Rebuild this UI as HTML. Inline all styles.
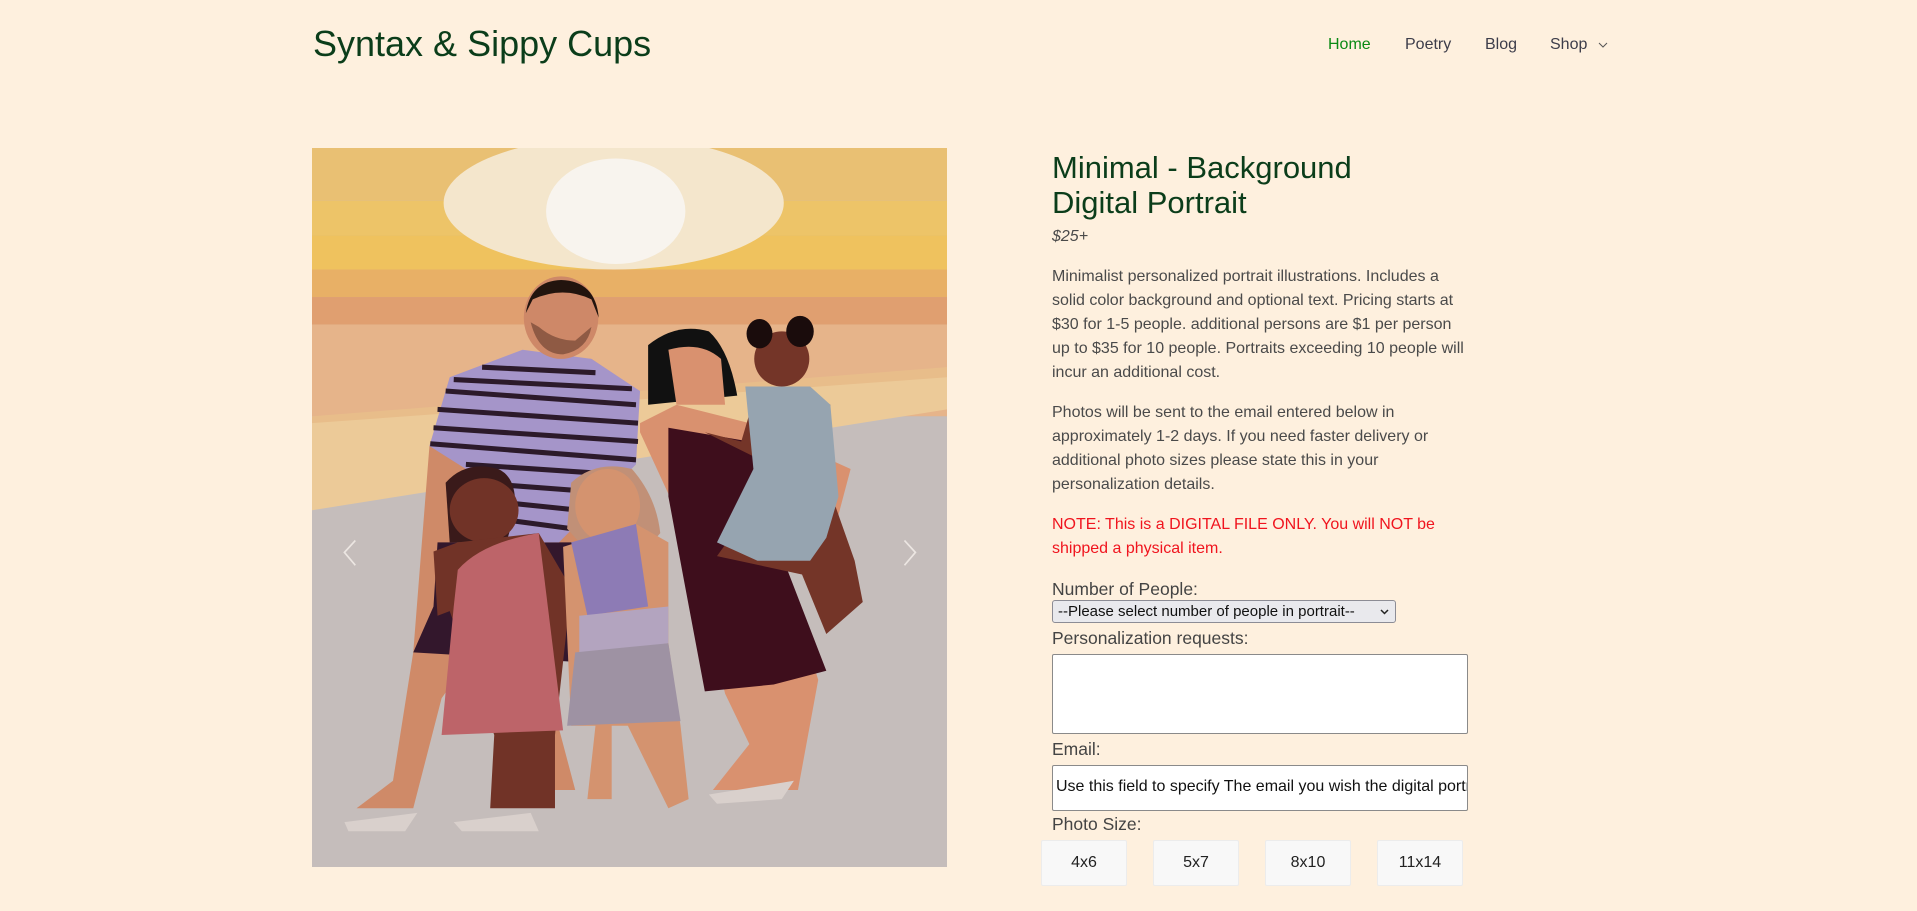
<!DOCTYPE html>
<html><head><meta charset="utf-8"><style>
*{margin:0;padding:0;box-sizing:border-box}
body{width:1917px;height:911px;overflow:hidden;background:#fef0de;font-family:"Liberation Sans",sans-serif;color:#4a4a4a;position:relative}
.logo{position:absolute;left:313px;top:23px;font-size:36px;color:#0b3d1a;letter-spacing:0;white-space:nowrap}
.nav{position:absolute;top:36px;font-size:16px;color:#3d3d4a}
.img{position:absolute;left:312px;top:148px;width:635px;height:719px}
.col{position:absolute;left:1052px;top:150px;width:415px}
h1{font-weight:normal;font-size:31px;line-height:35px;color:#0b3d1a;margin-top:0}
.price{font-style:italic;font-size:16px;margin-top:5px;line-height:24px}
p{font-size:16px;line-height:24px;margin-top:16px}
.red{color:#f0141e}
label{display:block;font-size:17.5px;line-height:22px;color:#444}
.sel{width:344px;height:23px;border:1px solid #8c8c95;border-radius:3px;background:#e9e9ed;font-size:15px;color:#111;padding:1px 5px;position:relative;line-height:19px}
.ta{width:416px;height:80px;background:#fff;border:1px solid #8a8a8a;border-radius:2px}
.in{width:416px;height:46px;background:#fff;border:1px solid #8a8a8a;border-radius:2px;font-size:16px;color:#111;padding:12px 3px;white-space:nowrap;overflow:hidden}
.btn{position:absolute;top:840px;width:86px;height:46px;background:#f8f8f8;border:1px solid #ececec;border-radius:2px;text-align:center;line-height:44px;font-size:16px;color:#222}
</style></head><body>
<div class="logo">Syntax &amp; Sippy Cups</div>
<div class="nav" style="left:1328px;color:#0a8a14">Home</div>
<div class="nav" style="left:1405px">Poetry</div>
<div class="nav" style="left:1485px">Blog</div>
<div class="nav" style="left:1550px">Shop</div>
<svg style="position:absolute;left:1598px;top:42px" width="10" height="7"><path d="M1 1l4 4 4-4" fill="none" stroke="#555" stroke-width="1"/></svg>

<svg class="img" viewBox="0 0 1568 1568" preserveAspectRatio="none">
<rect width="1568" height="1568" fill="#c5bdbb"/>
<rect width="1568" height="115" fill="#e9c073"/>
<rect y="115" width="1568" height="75" fill="#edc468"/>
<rect y="190" width="1568" height="75" fill="#efc25e"/>
<rect y="265" width="1568" height="60" fill="#e8b066"/>
<rect y="325" width="1568" height="60" fill="#e09f70"/>
<rect y="385" width="1568" height="200" fill="#e6b48a"/>
<path d="M0 590 L1568 480 L1568 570 L0 790Z" fill="#ecca98"/>
<path d="M0 585 L1568 478 L1568 500 L0 600Z" fill="#e8bd8a"/>
<ellipse cx="745" cy="120" rx="420" ry="145" fill="#f4e6cc"/>
<ellipse cx="750" cy="138" rx="172" ry="115" fill="#f8f4ee"/>
<path d="M290 650 L250 1100 L200 1380 L110 1440 L250 1440 L320 1200 L400 1100 L510 1400 L650 1400 L560 1100 L620 1100 L640 900 L800 680 L790 520 L690 460 L520 450 L340 510Z" fill="#cf8a68"/>
<path d="M300 1000 L250 1100 L640 1120 L660 860 L310 860Z" fill="#33172c"/>
<path d="M340 500 L520 440 L690 460 L810 530 L800 690 L610 860 L470 860 L380 700 L290 650Z" fill="#a595c9"/>
<g stroke="#2c1a2a" stroke-width="11">
<path d="M330 530 L800 560M310 570 L805 600M300 610 L805 640M292 645 L800 680M380 690 L720 710M400 730 L700 750M440 770 L660 790M470 810 L640 830M350 505 L790 525M420 478 L700 490"/>
</g>
<ellipse cx="615" cy="370" rx="92" ry="90" fill="#ce8868"/>
<path d="M528 360 Q540 290 615 288 Q700 290 708 370 L690 330 Q620 300 545 330Z" fill="#22140e"/>
<path d="M540 380 Q560 450 620 450 Q680 440 690 390 L650 420 Q600 420 560 390Z" fill="#8f5a44"/>
<path d="M830 430 Q900 380 980 400 Q1030 440 1050 540 L830 560Z" fill="#111"/>
<path d="M880 440 Q960 420 1010 460 L1020 560 L900 560Z" fill="#d9916f"/>
<path d="M810 600 L900 560 L1080 600 L1330 700 L1300 800 L1160 900 L1250 1160 L1200 1400 L990 1400 L1080 1300 L1020 1190 L930 850 L810 620Z" fill="#d9916f"/>
<path d="M880 610 L1080 640 L1130 820 L1270 1140 L1140 1170 L970 1185 L920 950 L880 760Z" fill="#3e0e1c"/>
<ellipse cx="1160" cy="460" rx="68" ry="60" fill="#743528"/>
<circle cx="1105" cy="405" r="32" fill="#1a0c0c"/><circle cx="1205" cy="400" r="34" fill="#1a0c0c"/>
<path d="M970 620 L1060 640 L1100 520 L1180 520 L1280 560 L1260 700 L1340 900 L1360 990 L1270 1060 L1210 930 L1000 890 L1090 780 L1130 690Z" fill="#743528"/>
<path d="M1070 520 L1230 520 L1280 560 L1300 760 L1270 850 L1230 900 L1100 900 L1000 860 L1090 700Z" fill="#96a4b0"/>
<path d="M330 730 Q380 680 460 700 Q510 720 500 800 L480 860 L340 860Z" fill="#3a1a1a"/>
<ellipse cx="425" cy="790" rx="85" ry="70" fill="#713327"/>
<path d="M300 880 L360 860 L560 840 L640 960 L600 1280 L600 1440 L440 1440 L450 1280 L340 1010 L310 1020Z" fill="#713327"/>
<path d="M360 920 Q420 860 560 840 L620 1270 L320 1280 L350 1000Z" fill="#bd6469"/>
<path d="M640 730 Q700 680 790 700 Q850 760 860 840 L840 860 L660 860 L630 830Z" fill="#c19077"/>
<ellipse cx="730" cy="780" rx="80" ry="80" fill="#d4936f"/>
<path d="M620 870 L800 820 L880 860 L880 1080 L910 1260 L930 1420 L880 1440 L780 1260 L740 1260 L740 1420 L680 1420 L700 1260 L640 1260Z" fill="#d4936f"/>
<path d="M640 860 L800 820 L830 1000 L680 1020Z" fill="#8d7bb5"/>
<path d="M660 1020 L880 1000 L880 1080 L660 1110Z" fill="#b3a4bf"/>
<path d="M650 1100 L880 1080 L910 1250 L630 1260Z" fill="#9e92a3"/>
<g fill="#d9d0cc"><path d="M80 1470 L260 1450 L230 1490 L90 1490Z"/><path d="M350 1470 L540 1450 L560 1490 L370 1490Z"/><path d="M980 1410 L1190 1380 L1160 1420 L1000 1430Z"/></g>
<path d="M107 856 L80 882 L107 910" stroke="#ece6e2" stroke-width="4" fill="none"/>
<path d="M1463 856 L1490 882 L1463 910" stroke="#ece6e2" stroke-width="4" fill="none"/>
</svg>

<div class="col">
<h1>Minimal - Background<br>Digital Portrait</h1>
<div class="price">$25+</div>
<p>Minimalist personalized portrait illustrations. Includes a solid color background and optional text. Pricing starts at $30 for 1-5 people. additional persons are $1 per person up to $35 for 10 people. Portraits exceeding 10 people will incur an additional cost.</p>
<p>Photos will be sent to the email entered below in approximately 1-2 days. If you need faster delivery or additional photo sizes please state this in your personalization details.</p>
<p class="red">NOTE: This is a DIGITAL FILE ONLY. You will NOT be shipped a physical item.</p>
<label style="margin-top:17px">Number of People:</label>
<div class="sel">--Please select number of people in portrait--<svg style="position:absolute;right:6px;top:8px" width="9" height="6"><path d="M1 1l3.5 3.5L8 1" fill="none" stroke="#222" stroke-width="1.5"/></svg></div>
<label style="margin-top:4px">Personalization requests:</label>
<div class="ta" style="margin-top:5px"></div>
<label style="margin-top:4px">Email:</label>
<div class="in" style="margin-top:5px">Use this field to specify The email you wish the digital portrait sent to</div>
<label style="margin-top:2px">Photo Size:</label>
</div>
<div class="btn" style="left:1041px">4x6</div>
<div class="btn" style="left:1153px">5x7</div>
<div class="btn" style="left:1265px">8x10</div>
<div class="btn" style="left:1377px">11x14</div>
</body></html>
